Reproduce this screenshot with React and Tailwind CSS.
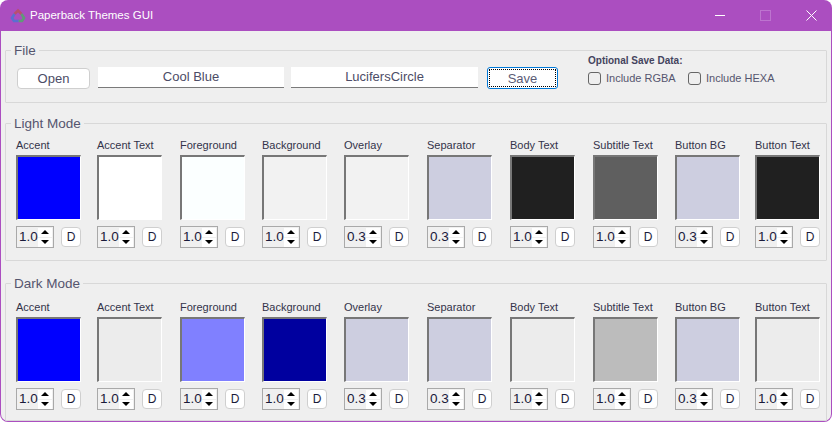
const LIGHT = [
  { label: 'Accent', color: 'bg-[#0000ff]', value: '1.0' },
  { label: 'Accent Text', color: 'bg-[#ffffff]', value: '1.0' },
  { label: 'Foreground', color: 'bg-[#fbffff]', value: '1.0' },
  { label: 'Background', color: 'bg-[#f2f2f2]', value: '1.0' },
  { label: 'Overlay', color: 'bg-[#f2f2f2]', value: '0.3' },
  { label: 'Separator', color: 'bg-[#cdcee0]', value: '0.3' },
  { label: 'Body Text', color: 'bg-[#202020]', value: '1.0' },
  { label: 'Subtitle Text', color: 'bg-[#5f5f5f]', value: '1.0' },
  { label: 'Button BG', color: 'bg-[#cdcee0]', value: '0.3' },
  { label: 'Button Text', color: 'bg-[#202020]', value: '1.0' },
]

const DARK = [
  { label: 'Accent', color: 'bg-[#0000ff]', value: '1.0' },
  { label: 'Accent Text', color: 'bg-[#ececec]', value: '1.0' },
  { label: 'Foreground', color: 'bg-[#8080ff]', value: '1.0' },
  { label: 'Background', color: 'bg-[#00009f]', value: '1.0' },
  { label: 'Overlay', color: 'bg-[#cdcee0]', value: '0.3' },
  { label: 'Separator', color: 'bg-[#cdcee0]', value: '0.3' },
  { label: 'Body Text', color: 'bg-[#ececec]', value: '1.0' },
  { label: 'Subtitle Text', color: 'bg-[#bcbcbc]', value: '1.0' },
  { label: 'Button BG', color: 'bg-[#cdcee0]', value: '0.3' },
  { label: 'Button Text', color: 'bg-[#ececec]', value: '1.0' },
]

function Logo() {
  return (
    <svg width="16" height="16" viewBox="0 0 16 16" fill="none" strokeWidth="2.6">
      <path d="M4.5 6 L8 2.5 L11.5 6" stroke="#b8506e" />
      <path d="M11.5 6 L14 10 L12 13 L8.5 13" stroke="#5f9a78" />
      <path d="M8.5 13 L4 13 L2 10 L4.5 6" stroke="#5a6fd0" />
    </svg>
  )
}

function WindowButtons() {
  return (
    <div className="ml-auto flex items-center">
      <svg width="10" height="11" viewBox="0 0 10 11" className="mr-[35px]" shapeRendering="crispEdges">
        <path d="M0 5.5H10" stroke="#ffffff" />
      </svg>
      <svg width="11" height="11" viewBox="0 0 11 11" className="mr-[35px]" shapeRendering="crispEdges">
        <rect x="0.5" y="0.5" width="10" height="10" fill="none" stroke="#bd74cf" />
      </svg>
      <svg width="11" height="11" viewBox="0 0 11 11" className="mr-[15px]">
        <path d="M0.5 0.5L10.5 10.5M10.5 0.5L0.5 10.5" stroke="#ffffff" />
      </svg>
    </div>
  )
}

function Spinner({ value }) {
  return (
    <div className="flex h-[22px] w-[38px] items-center border border-[#a9a9a9] bg-[#f0f0f0] pl-[2px]">
      <span className="flex-1 text-[13.5px] leading-none text-[#1a1a3a]">{value}</span>
      <div className="mr-[1px] flex w-[14px] flex-col gap-[1px]">
        <div className="flex h-[9px] items-center justify-center bg-white">
          <div className="h-0 w-0 border-x-[4px] border-b-[4px] border-x-transparent border-b-black" />
        </div>
        <div className="flex h-[9px] items-center justify-center bg-white">
          <div className="h-0 w-0 border-x-[4px] border-t-[4px] border-x-transparent border-t-black" />
        </div>
      </div>
    </div>
  )
}

function Swatch({ label, color, value }) {
  return (
    <div className="flex flex-col">
      <div className="h-[17px] whitespace-nowrap text-[11px] leading-[17px] text-[#33334a]">{label}</div>
      <div className={`mt-[1px] h-[65px] w-[65px] border-t-2 border-l-2 border-t-[#777777] border-l-[#777777] border-r border-b border-r-white border-b-white ${color}`} />
      <div className="mt-[6px] flex w-[65px] items-center justify-between">
        <Spinner value={value} />
        <button className="flex h-[20px] w-[20px] items-center justify-center rounded-[4px] border border-[#cfcfcf] bg-white text-[12px] text-[#1a1a3a]">
          D
        </button>
      </div>
    </div>
  )
}

function ModeGroup({ title, items, className, gridClass }) {
  return (
    <fieldset className={`mx-[4px] rounded-[1px] border border-[#d8d8d8] pl-[10px] ${className}`}>
      <legend className="-ml-[5px] px-[3px] text-[13.5px] leading-[17px] text-[#55556e]">{title}</legend>
      <div className={`grid grid-cols-[81px_83px_82px_82px_83px_83px_83px_82px_80px_70px] ${gridClass}`}>
        {items.map(item => (
          <Swatch key={item.label} {...item} />
        ))}
      </div>
    </fieldset>
  )
}

export default function App() {
  return (
    <div className="flex h-[422px] w-[832px] flex-col overflow-hidden rounded-[8px] bg-[#ab4ec0] pb-[1px] font-['Liberation_Sans',sans-serif]">
      {/* Title bar */}
      <div className="flex h-[31px] shrink-0 items-center pl-[10px] text-white">
        <Logo />
        <span className="ml-[4px] text-[11.5px]">Paperback Themes GUI</span>
        <WindowButtons />
      </div>

      {/* Content */}
      <div className="mx-[1px] flex-1 rounded-b-[7px] bg-[#efefef] pt-[11px]">
        <fieldset className="mx-[4px] h-[61px] rounded-[1px] border border-[#d8d8d8] pl-[11px]">
          <legend className="-ml-[6px] px-[3px] text-[13.5px] leading-[17px] text-[#55556e]">File</legend>
          <div className="flex items-start">
            <button className="mt-[9px] h-[21px] w-[73px] rounded-[4px] border border-[#cfcfcf] bg-white text-[13px] leading-none text-[#4c4c66]">
              Open
            </button>
            <div className="mt-[8px] ml-[8px] h-[21px] w-[186px] border-b border-b-[#7a7a7a] bg-white text-center text-[13px] leading-[19px] text-[#4c4c66]">
              Cool Blue
            </div>
            <div className="mt-[8px] ml-[7px] h-[21px] w-[187px] border-b border-b-[#7a7a7a] bg-white text-center text-[13px] leading-[19px] text-[#4c4c66]">
              LucifersCircle
            </div>
            <button className="mt-[8px] ml-[9px] h-[22px] w-[71px] rounded-[3px] border border-[#0078d7] bg-white p-[1px] text-[13px] leading-none text-[#5c5c76]">
              <span className="flex h-full w-full items-center justify-center border border-dotted border-black">Save</span>
            </button>
            <div className="-mt-[5px] ml-[30px] flex flex-col">
              <div className="h-[16px] text-[10px] font-bold leading-[14px] text-[#44445e]">Optional Save Data:</div>
              <div className="mt-[2px] flex items-center">
                <div className="h-[13px] w-[13px] rounded-[3px] border border-[#666666]" />
                <span className="ml-[5px] w-[69px] whitespace-nowrap text-[11px] leading-none text-[#55556e]">Include RGBA</span>
                <div className="ml-[13px] h-[13px] w-[13px] rounded-[3px] border border-[#666666]" />
                <span className="ml-[5px] whitespace-nowrap text-[11px] leading-none text-[#55556e]">Include HEXA</span>
              </div>
            </div>
          </div>
        </fieldset>

        <ModeGroup title="Light Mode" items={LIGHT} className="mt-[12px] h-[146px]" gridClass="pt-[5px]" />
        <ModeGroup title="Dark Mode" items={DARK} className="mt-[14px] h-[146px]" gridClass="pt-[7px]" />
      </div>
    </div>
  )
}
